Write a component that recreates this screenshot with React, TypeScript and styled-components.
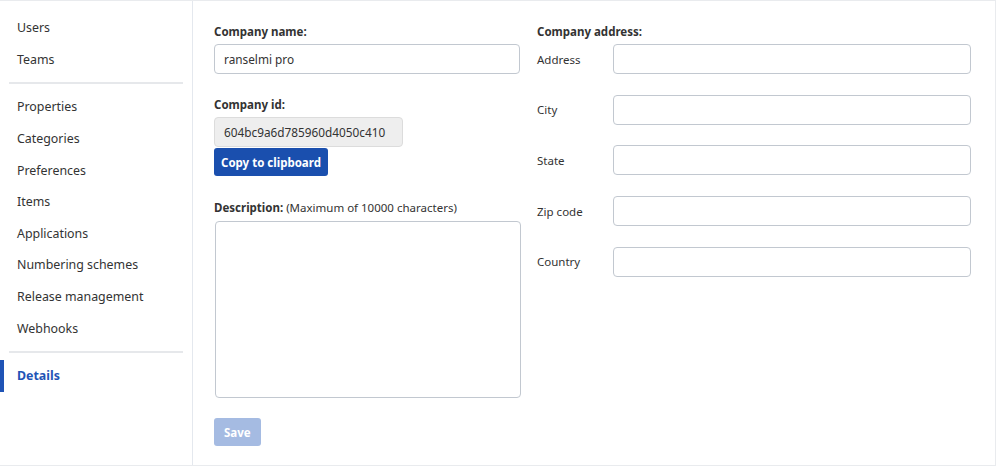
import React from "react";
import styled, { createGlobalStyle } from "styled-components";

const Global = createGlobalStyle`
  html, body { margin: 0; padding: 0; background: #fff; }
  body { font-family: "Noto Sans", "DejaVu Sans", sans-serif; color: #333; }
  * { box-sizing: border-box; }
`;

const Frame = styled.div`
  display: flex;
  width: 996px;
  height: 466px;
  border-top: 1px solid #e9ebee;
  border-right: 1px solid #e9ebee;
  border-bottom: 1px solid #e9ebee;
  background: #fff;
`;

const Sidebar = styled.nav`
  width: 193px;
  flex: none;
  border-right: 1px solid #e4e8ee;
  padding-top: 11px;
  display: flex;
  flex-direction: column;
`;

const NavItem = styled.div<{ $active?: boolean }>`
  position: relative;
  height: 31.6px;
  display: flex;
  align-items: center;
  padding-left: 17px;
  font-size: 12.4px;
  color: ${(p) => (p.$active ? "#1f54b6" : "#333")};
  font-weight: ${(p) => (p.$active ? 700 : 400)};
  &::before {
    content: "";
    display: ${(p) => (p.$active ? "block" : "none")};
    position: absolute;
    left: 0;
    top: 0;
    bottom: 0;
    width: 4px;
    background: #1f54b6;
  }
`;

const Divider = styled.div`
  height: 2px;
  background: #e6e8eb;
  margin: 7px 9px 7px 9px;
`;

const Main = styled.main`
  flex: 1;
  min-width: 0;
  display: flex;
  gap: 17px;
  padding: 22px 24px 0 21px;
`;

const LeftCol = styled.div`
  width: 306px;
  flex: none;
  display: flex;
  flex-direction: column;
`;

const RightCol = styled.div`
  flex: 1;
  min-width: 0;
  display: flex;
  flex-direction: column;
`;

const Label = styled.div<{ $mt?: number }>`
  font-size: 11.5px;
  font-weight: 700;
  color: #333;
  line-height: 18px;
  margin-top: ${(p) => p.$mt ?? 0}px;
  margin-bottom: 3px;
`;

const Note = styled.span`
  font-weight: 400;
`;

const Input = styled.input<{ $w?: number; $readOnly?: boolean }>`
  width: ${(p) => (p.$w ? `${p.$w}px` : "100%")};
  height: 30px;
  flex: none;
  border: 1px solid ${(p) => (p.$readOnly ? "#dcdcdc" : "#c2c8d0")};
  border-radius: 4px;
  background: ${(p) => (p.$readOnly ? "#eeeeee" : "#fff")};
  padding: 0 9px;
  font-family: "Noto Sans", sans-serif;
  font-size: 11.8px;
  color: #333;
  outline: none;
`;

const AddrInput = styled(Input)`
  flex: 1;
  width: auto;
  min-width: 0;
`;

const TextArea = styled.textarea`
  width: 306px;
  height: 177px;
  margin-left: 1px;
  margin-top: 1px;
  border: 1px solid #c2c8d0;
  border-radius: 4px;
  resize: none;
  font-family: "Noto Sans", sans-serif;
  outline: none;
`;

const Button = styled.button<{ $disabled?: boolean; $mt?: number }>`
  align-self: flex-start;
  height: 28px;
  margin-top: ${(p) => p.$mt ?? 0}px;
  padding: 0 ${(p) => (p.$disabled ? 10 : 7)}px;
  border: none;
  border-radius: 3px;
  background: ${(p) => (p.$disabled ? "#a5bbe2" : "#1a4fae")};
  color: #fff;
  font-family: "Noto Sans", sans-serif;
  font-size: 11.5px;
  font-weight: 700;
`;

const AddrRow = styled.div`
  display: flex;
  align-items: center;
  height: 30px;
  margin-bottom: 20.7px;
`;

const AddrLabel = styled.div`
  width: 76px;
  flex: none;
  font-size: 11.5px;
  color: #333;
`;

const navTop = ["Users", "Teams"];
const navMid = [
  "Properties",
  "Categories",
  "Preferences",
  "Items",
  "Applications",
  "Numbering schemes",
  "Release management",
  "Webhooks",
];
const addr = ["Address", "City", "State", "Zip code", "Country"];

export default function App() {
  return (
    <>
      <Global />
      <Frame>
        <Sidebar>
          {navTop.map((n) => (
            <NavItem key={n}>{n}</NavItem>
          ))}
          <Divider />
          {navMid.map((n) => (
            <NavItem key={n}>{n}</NavItem>
          ))}
          <Divider />
          <NavItem $active>Details</NavItem>
        </Sidebar>
        <Main>
          <LeftCol>
            <Label>Company name:</Label>
            <Input defaultValue="ranselmi pro" />
            <Label $mt={22}>Company id:</Label>
            <Input $w={189} $readOnly readOnly defaultValue="604bc9a6d785960d4050c410" />
            <Button $mt={1}>Copy to clipboard</Button>
            <Label $mt={23}>
              Description: <Note>(Maximum of 10000 characters)</Note>
            </Label>
            <TextArea />
            <Button $disabled $mt={20}>Save</Button>
          </LeftCol>
          <RightCol>
            <Label>Company address:</Label>
            {addr.map((a) => (
              <AddrRow key={a}>
                <AddrLabel>{a}</AddrLabel>
                <AddrInput />
              </AddrRow>
            ))}
          </RightCol>
        </Main>
      </Frame>
    </>
  );
}
